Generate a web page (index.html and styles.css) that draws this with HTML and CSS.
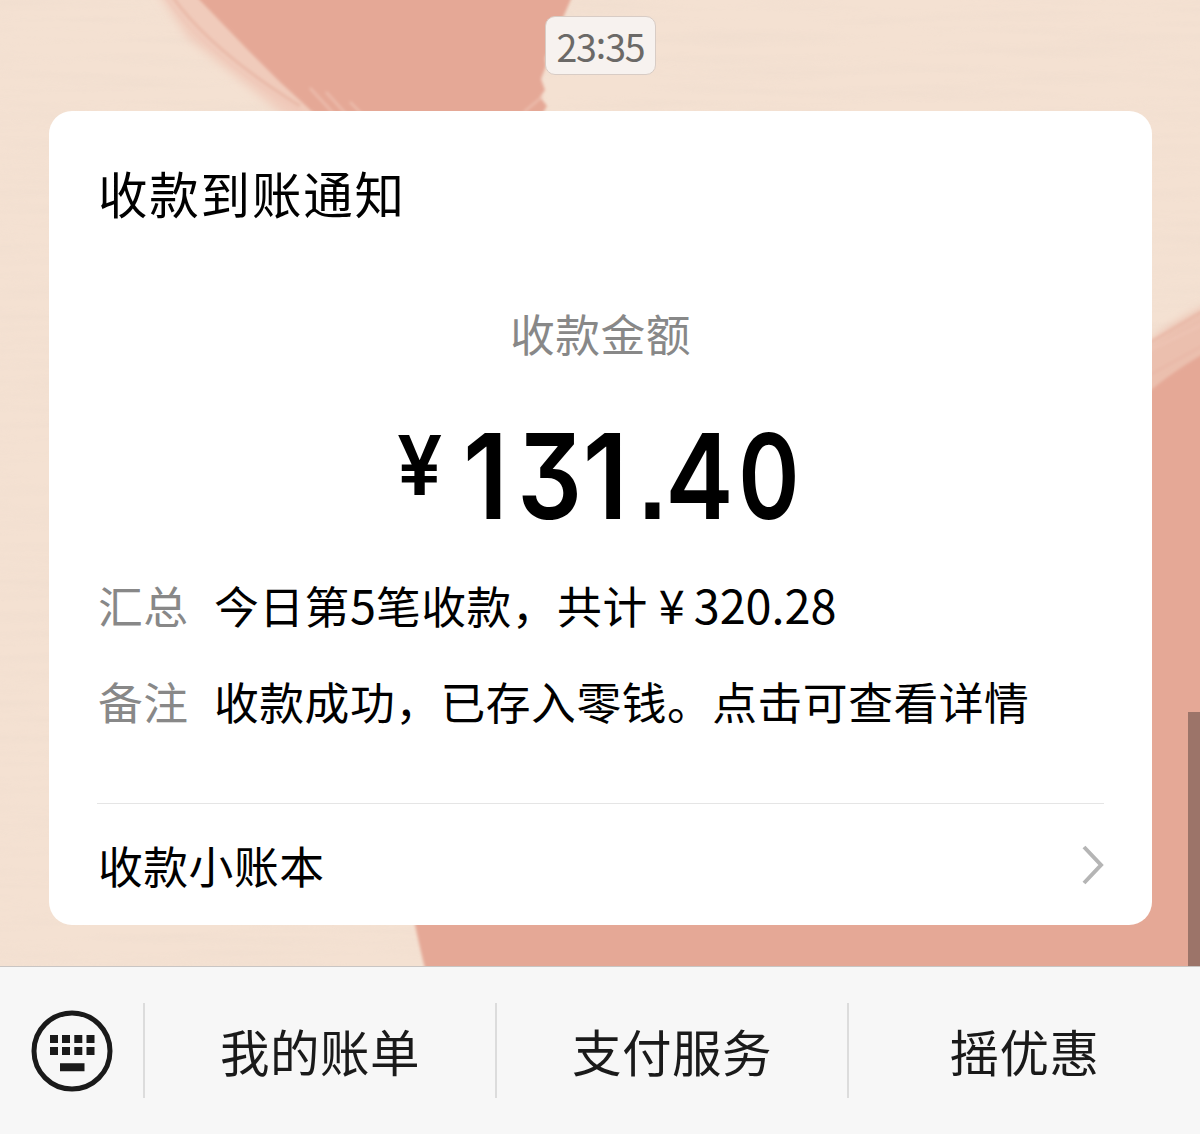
FILE: index.html
```html
<!DOCTYPE html>
<html lang="zh-CN">
<head>
<meta charset="utf-8">
<title>收款到账通知</title>
<link rel="stylesheet" href="styles.css">
</head>
<body>
<main class="chat">
  <svg class="wallpaper" viewBox="0 0 1200 966" aria-hidden="true">
    <defs>
      <filter id="grain" x="0" y="0" width="100%" height="100%">
        <feTurbulence type="fractalNoise" baseFrequency="0.006 0.09" numOctaves="3" seed="4"/>
        <feColorMatrix values="0 0 0 0 .86  0 0 0 0 .72  0 0 0 0 .62  1.8 0 0 0 -.7"/>
      </filter>
      <filter id="soft" x="-5%" y="-5%" width="110%" height="110%"><feGaussianBlur stdDeviation="1.8"/></filter>
      <filter id="softer" x="-10%" y="-10%" width="120%" height="120%"><feGaussianBlur stdDeviation="5"/></filter>
    </defs>
    <rect width="1200" height="966" fill="#f4e1d2"/>
    <rect width="1200" height="966" filter="url(#grain)" opacity=".6"/>
    <g filter="url(#softer)">
      <path d="M150-20 188 38 290 120H345L205-20Z" fill="#f0cbbb"/>
      <path d="M1140 350Q1170 322 1220 300V370L1140 410Z" fill="#ebbfae"/>
    </g>
    <g filter="url(#soft)">
      <path d="M190-10 247 49 280 82 317 116H541L547 106 540 97 545 90 541 79 546 66 545 58 562 20 575-10Z" fill="#e5a896"/>
      <path d="M1140 400Q1165 376 1210 350V980H428Q420 950 413 915H1140Z" fill="#e5a896"/>
      <path d="M172-4Q210 50 300 106M1148 344 1202 312M1148 376 1202 346" fill="none" stroke="#e9b9a8" stroke-width="3"/>
      <path d="M165-4Q205 56 305 114M1148 351 1202 325M310 88 334 114M326 92 346 114M350 102 362 114M524 112 543 96" fill="none" stroke="#efc6b6" stroke-width="2" opacity=".8"/>
    </g>
  </svg>

  <time class="stamp">23<span class="colon">:</span>35</time>

  <article class="card">
    <h1 class="title">收款到账通知</h1>
    <p class="caption">收款金额</p>
    <p class="amount"><span class="yen">¥</span><span class="digits"><span class="one">1</span><span class="three">3</span><span class="one">1</span><span class="dot">.</span><span class="four">4</span><span class="zero">0</span></span></p>
    <dl class="details">
      <dt>汇总</dt>
      <dd>今日第<span class="num">5</span>笔收款，共计<span class="num money"><span class="sign">¥</span>320.28</span></dd>
      <dt>备注</dt>
      <dd>收款成功，已存入零钱。点击可查看详情</dd>
    </dl>
    <footer class="ledger">
      <span>收款小账本</span>
      <svg class="chevron" viewBox="0 0 24 42"><path d="M4 3 21 21 4 39" fill="none" stroke="#b5b5b5" stroke-width="4"/></svg>
    </footer>
  </article>
  <div class="scrollbar"></div>
</main>

<nav class="menu">
  <div class="switch">
    <svg viewBox="0 0 82 82" width="82" height="82">
      <circle cx="41" cy="41" r="38" fill="none" stroke="#1a1a1a" stroke-width="5"/>
      <path fill="#1a1a1a" d="M19 25h8v8h-8zM31 25h8v8h-8zM43.300 25h8v8h-8zM55.500 25h8v8h-8zM19 37h8v8h-8zM31 37h8v8h-8zM43.300 37h8v8h-8zM55.500 37h8v8h-8zM29 53.300h24.500v8H29z"/>
    </svg>
  </div>
  <a class="item">我的账单</a>
  <a class="item">支付服务</a>
  <a class="item">摇优惠</a>
</nav>
</body>
</html>
```
FILE: styles.css
```css
* { box-sizing: border-box; margin: 0; padding: 0; }

body {
  width: 1200px;
  height: 1134px;
  overflow: hidden;
  font-family: "Noto Sans CJK SC", sans-serif;
  color: #000;
}

.chat {
  position: relative;
  display: flex;
  flex-direction: column;
  align-items: center;
  height: 966px;
  padding: 16px 48px 0 49px;
}

.wallpaper { position: absolute; inset: 0; width: 1200px; height: 966px; }

.stamp {
  position: relative;
  width: 111px;
  height: 59px;
  border: 1px solid #d8ccc5;
  border-radius: 10px;
  background: #f7f2ef;
  color: #6b6967;
  font-size: 37.5px;
  line-height: 57px;
  letter-spacing: -1.1px;
  text-align: center;
}

.colon { display: inline-block; line-height: 1; transform: translateY(-3px); }

.card {
  position: relative;
  display: flex;
  flex-direction: column;
  width: 1103px;
  height: 814px;
  margin-top: 36px;
  padding: 54px 48px 0;
  border-radius: 23px;
  background: #fff;
}

.title {
  padding-left: 1px;
  font-size: 49.500px;
  font-weight: 400;
  line-height: 56px;
  letter-spacing: 1.800px;
}

.caption {
  margin-top: 84px;
  color: #888;
  font-size: 44.800px;
  line-height: 56px;
  letter-spacing: .5px;
  text-align: center;
}

.amount {
  display: flex;
  align-items: flex-start;
  height: 120px;
  margin: 57px 0 0 300px;
  font-family: Inter, sans-serif;
  font-weight: 600;
}

.yen {
  width: 66px;
  font-size: 82px;
  line-height: 96px;
  transform: scaleX(.98);
  transform-origin: left;
}

.digits {
  display: flex;
  font-size: 118px;
  line-height: 117px;
  font-feature-settings: "cv09" 1, "ss07" 1;
  transform: scaleX(.82);
  transform-origin: left;
}

.one { margin-right: 18.500px; transform: scaleX(1.1); transform-origin: left; }
.three { margin-right: 2px; transform: scaleX(1.05); }
.dot { margin-right: -2.500px; transform: translateX(-2px); }
.four { margin-right: 6px; transform: scaleX(1.06); }
.zero { transform: scaleX(.96); }

.details {
  display: grid;
  grid-template-columns: 116px 1fr;
  row-gap: 40px;
  margin-top: 39px;
  padding-left: 1px;
  font-size: 44.800px;
  line-height: 56px;
  letter-spacing: .5px;
  white-space: nowrap;
}

.details dt { color: #888; }

.num { font-size: 46.800px; letter-spacing: 0; line-height: 1; }
.money { margin-left: 11px; }
.sign { margin-right: 9px; }

.ledger {
  display: flex;
  align-items: center;
  justify-content: space-between;
  height: 122px;
  margin-top: auto;
  padding-left: 1px;
  border-top: 1px solid #e5e5e5;
  font-size: 44.800px;
  letter-spacing: .5px;
}

.chevron { width: 24px; height: 42px; }

.scrollbar {
  position: absolute;
  right: 0;
  bottom: 0;
  width: 12px;
  height: 254px;
  background: #9c7469;
}

.menu {
  display: grid;
  grid-template-columns: 143px 352px 352px 353px;
  align-items: center;
  height: 168px;
  border-top: 1px solid #c9c5c3;
  background: #f7f7f7;
  color: #1a1a1a;
}

.switch { display: flex; justify-content: center; padding-left: 1px; }

.item {
  display: flex;
  align-items: center;
  justify-content: center;
  height: 95px;
  border-left: 2px solid #dcdcdc;
  font-size: 49.500px;
  line-height: 1;
  letter-spacing: .5px;
}
```
